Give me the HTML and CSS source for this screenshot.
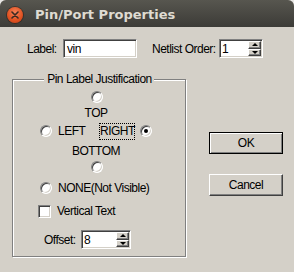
FILE: index.html
```html
<!DOCTYPE html>
<html>
<head>
<meta charset="utf-8">
<link rel="stylesheet" href="styles.css">
</head>
<body>
<div class="window">
  <div class="titlebar">
    <span class="close"><svg width="8" height="8" viewBox="0 0 8 8"><path d="M1 1L7 7M7 1L1 7" stroke="#3a2a22" stroke-width="1.6" stroke-linecap="round"/></svg></span>
    <span class="title">Pin/Port Properties</span>
  </div>
  <div class="content">
    <div class="top-row">
      <span class="lbl lbl-label">Label:</span>
      <div class="field field-label"><span class="val">vin</span></div>
      <span class="lbl lbl-order">Netlist Order:</span>
      <div class="field spin spin-order"><span class="val">1</span><div class="spin-btns"><span class="sb up"></span><span class="sb down"></span></div></div>
    </div>
    <div class="main">
      <div class="group">
        <div class="group-title">Pin Label Justification</div>
        <div class="row-c r-top"><span class="radio"></span></div>
        <div class="row-t t-top">TOP</div>
        <div class="row-l r-mid">
          <span class="radio"></span>
          <span class="lbl-left">LEFT</span>
          <span class="focus">RIGHT</span>
          <span class="radio on"></span>
        </div>
        <div class="row-t t-bottom">BOTTOM</div>
        <div class="row-c r-bottom"><span class="radio"></span></div>
        <div class="row-l r-none"><span class="radio"></span><span class="opt">NONE(Not Visible)</span></div>
        <div class="row-l r-check"><span class="check"></span><span class="opt">Vertical Text</span></div>
        <div class="row-l r-offset">
          <span class="lbl-offset">Offset:</span>
          <div class="field spin spin-offset"><span class="val">8</span><div class="spin-btns"><span class="sb up"></span><span class="sb down"></span></div></div>
        </div>
      </div>
      <div class="buttons">
        <button class="btn btn-default">OK</button>
        <button class="btn">Cancel</button>
      </div>
    </div>
  </div>
</div>
</body>
</html>
```

FILE: styles.css
```css
* { box-sizing: border-box; }
html, body { margin: 0; padding: 0; }
body {
  background: #e9e8e6;
  font-family: "Liberation Sans", Arial, sans-serif;
  font-size: 12px;
  letter-spacing: -0.5px;
  color: #000;
  white-space: nowrap;
}
.window {
  width: 294px;
  height: 272px;
  background: #d4d0c8;
  display: flex;
  flex-direction: column;
  border-radius: 6px 6px 0 0;
  overflow: hidden;
}
.titlebar {
  height: 27px;
  flex: none;
  background: linear-gradient(#57564f, #3c3b37);
  display: flex;
  align-items: center;
  padding: 2px 0 0 7px;
  gap: 12px;
}
.close {
  width: 16px;
  height: 16px;
  border-radius: 50%;
  background: radial-gradient(circle at 50% 35%, #f6835a, #e0501f 60%, #b63b18);
  box-shadow: 0 0 0 1px rgba(40, 20, 10, 0.45);
  display: flex;
  align-items: center;
  justify-content: center;
}
.title {
  font: bold 13px "DejaVu Sans", sans-serif;
  letter-spacing: 0;
  color: #dfdbd2;
  line-height: 16px;
}
.content { padding-top: 12px; }
.top-row {
  display: flex;
  align-items: center;
  height: 19px;
  padding-left: 27px;
}
.lbl-label { width: 36px; }
.lbl-order { width: 67px; margin-left: 15px; }
.field {
  height: 19px;
  background: #fff;
  border: 1px solid;
  border-color: #808080 #fff #fff #808080;
  box-shadow: inset 1px 1px #404040, inset -1px -1px #d4d0c8;
  display: flex;
  align-items: center;
  padding: 1px 1px 1px 3px;
}
.field-label { width: 74px; }
.spin { padding: 1px 1px 1px 2px; }
.spin .val { flex: 1; }
.spin-order { width: 44px; }
.spin-offset { width: 50px; }
.spin-btns {
  display: flex;
  flex-direction: column;
  width: 13px;
  height: 100%;
}
.sb {
  flex: 1;
  background: #d4d0c8;
  border: 1px solid;
  border-color: #fff #404040 #404040 #fff;
  box-shadow: inset -1px -1px #808080;
  display: flex;
  align-items: center;
  justify-content: center;
}
.sb::after {
  content: "";
  border-left: 3px solid transparent;
  border-right: 3px solid transparent;
}
.sb.up::after { border-bottom: 3px solid #000; }
.sb.down::after { border-top: 3px solid #000; }
.main {
  display: flex;
  margin-top: 21px;
}
.group {
  margin-left: 12px;
  width: 174px;
  border: 1px solid #808080;
  box-shadow: inset 1px 1px #fff, 1px 1px #fff;
  padding-bottom: 7px;
  display: flex;
  flex-direction: column;
}
.group-title {
  align-self: center;
  margin-top: -8px;
  line-height: 14px;
  height: 14px;
  padding: 0 2px 0 3px;
  background: #d4d0c8;
}
.row-c {
  display: flex;
  justify-content: center;
  align-items: center;
  padding-right: 4px;
}
.row-t {
  display: flex;
  justify-content: center;
  align-items: center;
  padding-right: 6px;
}
.row-l {
  display: flex;
  align-items: center;
}
.r-top { margin-top: 5px; height: 12px; }
.t-top { height: 19px; }
.r-mid { height: 18px; padding-left: 27px; }
.t-bottom { height: 21px; }
.r-bottom { height: 12px; }
.r-none { height: 30px; padding-left: 27px; }
.r-check { height: 16px; padding-left: 25px; }
.r-offset { margin-top: 11px; height: 19px; padding-left: 31px; }
.lbl-left { width: 41px; margin-left: 6px; }
.focus {
  width: 36px;
  height: 17px;
  border: 1px dotted #000;
  display: flex;
  align-items: center;
  padding-left: 0;
}
.r-mid .radio.on { margin-left: 5px; }
.opt { margin-left: 6px; }
.lbl-offset { width: 37px; }
.radio {
  width: 12px;
  height: 12px;
  flex: none;
  border-radius: 50%;
  background: #fff;
  border: 1px solid;
  border-color: #808080 #fff #fff #808080;
  box-shadow: inset 1px 1px #404040, inset -1px -1px #d4d0c8;
  display: flex;
  align-items: center;
  justify-content: center;
}
.radio.on::after {
  content: "";
  width: 4px;
  height: 4px;
  border-radius: 50%;
  background: #000;
}
.check {
  width: 13px;
  height: 13px;
  flex: none;
  background: #fff;
  border: 1px solid;
  border-color: #808080 #fff #fff #808080;
  box-shadow: inset 1px 1px #404040, inset -1px -1px #d4d0c8;
}
.buttons {
  display: flex;
  flex-direction: column;
  gap: 20px;
  margin-left: 23px;
  padding-top: 53px;
}
.btn {
  width: 74px;
  height: 22px;
  padding: 0;
  font: inherit;
  letter-spacing: inherit;
  color: #000;
  background: #d4d0c8;
  border: 1px solid;
  border-color: #fff #404040 #404040 #fff;
  box-shadow: inset -1px -1px #808080;
}
.btn-default {
  border: 1px solid #000;
  box-shadow: inset 1px 1px #fff, inset -1px -1px #808080;
}
```
